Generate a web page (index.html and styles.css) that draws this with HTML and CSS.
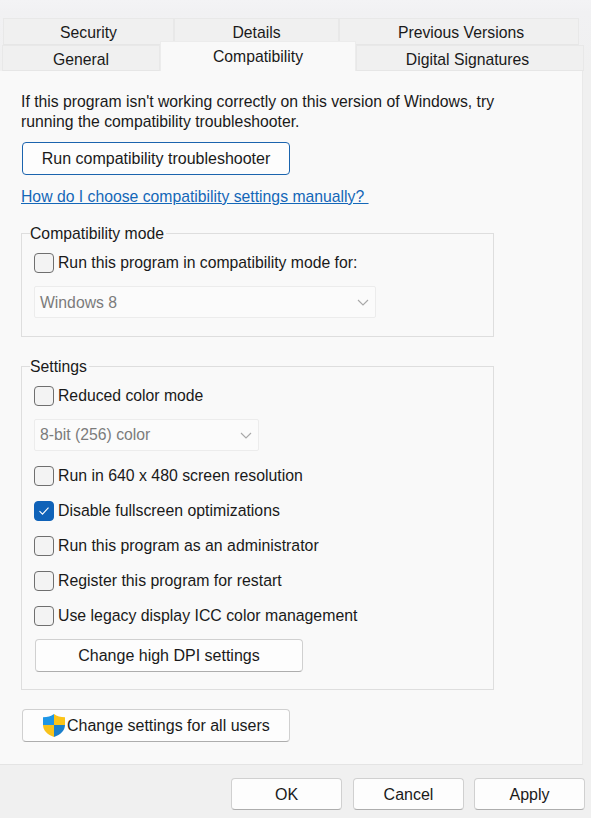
FILE: index.html
```html
<!DOCTYPE html>
<html>
<head>
<meta charset="UTF-8">
<meta name="viewport" content="initial-scale=1, maximum-scale=1">
<title>Properties</title>
<link rel="stylesheet" href="styles.css">
</head>
<body>
    <div class="dialog">
        <div class="tabs">
            <div class="tab-row tab-row-back">
                <div class="tab tab-security">Security</div>
                <div class="tab tab-details">Details</div>
                <div class="tab tab-versions">Previous Versions</div>
            </div>
            <div class="tab-row tab-row-front">
                <div class="tab tab-general">General</div>
                <div class="tab tab-compat active">Compatibility</div>
                <div class="tab tab-signatures">Digital Signatures</div>
            </div>
        </div>

        <div class="panel">
            <p class="intro">If this program isn't working correctly on this version of Windows, try running the compatibility troubleshooter.</p>
            <button class="btn btn-wide btn-primary">Run compatibility troubleshooter</button>
            <a class="help-link" href="#">How do I choose compatibility settings manually?&nbsp;</a>

            <fieldset class="group group-mode">
                <legend>Compatibility mode</legend>
                <label class="check"><span class="box"></span>Run this program in compatibility mode for:</label>
                <div class="select select-os">Windows 8
                    <svg class="chevron" viewBox="0 0 12 7"><path d="M1 1l5 5 5-5" fill="none" stroke="#a8a8a8" stroke-width="1.1"/></svg>
                </div>
            </fieldset>

            <fieldset class="group group-settings">
                <legend>Settings</legend>
                <label class="check"><span class="box"></span>Reduced color mode</label>
                <div class="select select-color">8-bit (256) color
                    <svg class="chevron" viewBox="0 0 12 7"><path d="M1 1l5 5 5-5" fill="none" stroke="#a8a8a8" stroke-width="1.1"/></svg>
                </div>
                <div class="check-list">
                    <label class="check"><span class="box"></span>Run in 640 x 480 screen resolution</label>
                    <label class="check"><span class="box checked"><svg viewBox="0 0 12 10"><path d="M1.5 5.2l3 3 6-6.6" fill="none" stroke="#fff" stroke-width="1.1"/></svg></span>Disable fullscreen optimizations</label>
                    <label class="check"><span class="box"></span>Run this program as an administrator</label>
                    <label class="check"><span class="box"></span>Register this program for restart</label>
                    <label class="check"><span class="box"></span>Use legacy display ICC color management</label>
                </div>
                <button class="btn btn-wide btn-dpi">Change high DPI settings</button>
            </fieldset>

            <button class="btn btn-wide btn-shield">
                <svg class="shield" viewBox="0 0 22 23">
                    <path d="M11 0C8 2.400 4.500 3.300 0 3.300V11h11z" fill="#1e96e6"/>
                    <path d="M11 0c3 2.400 6.500 3.300 11 3.300V11H11z" fill="#fcc417"/>
                    <path d="M0 11c.2 5.800 4.500 9.800 11 12V11z" fill="#f7c21c"/>
                    <path d="M22 11c-.2 5.800-4.500 9.800-11 12V11z" fill="#1b7fcb"/>
                </svg>Change settings for all users
            </button>
        </div>

        <div class="footer">
            <button class="btn btn-footer">OK</button>
            <button class="btn btn-footer">Cancel</button>
            <button class="btn btn-footer btn-apply">Apply</button>
        </div>
    </div>
</body>
</html>
```

FILE: styles.css
```css
* { padding: 0; margin: 0; box-sizing: border-box; }
html, body {
    width: 100%;
    height: 100%;
}
body {
    overflow: hidden;
    background: #f0f0f0;
    font-family: "Liberation Sans", Arial, sans-serif;
    font-size: 15.75px;
    color: #1a1a1a;
}
.dialog {
    display: flex;
    flex-direction: column;
    height: 818px;
    background: linear-gradient(#f3f3f5 0, #f1f1f3 12px, #f0f0f0 71px);
}

/* tabs */
.tabs {
    height: 71px;
    padding-top: 18px;
}
.tab-row {
    display: flex;
    height: 27px;
}
.tab-row-back {
    padding-left: 3px;
}
.tab-row-back .tab {
    line-height: 28px;
}
.tab-row-front {
    padding-left: 2px;
    height: 26px;
}
.tab {
    text-align: center;
    background: #f0f0f0;
    border: 1px solid #e8e8e8;
    border-bottom: 1px solid #e6e6e6;
    line-height: 27px;
}
.tab-security { width: 171px; }
.tab-details { width: 165px; }
.tab-versions { width: 240px; padding-left: 4px; }
.tab-general { width: 158px; }
.tab-signatures { width: 228px; padding-right: 5px; }
.tab-compat {
    width: 196px;
    margin-top: -4px;
    height: 30px;
    line-height: 29px;
    background: #f9f9f9;
    border-color: #ececec;
    border-bottom: 0;
}

/* main panel */
.panel {
    height: 694px;
    margin-right: 8px;
    padding: 21px 0 0 21px;
    background: #f9f9f9;
    border-right: 1px solid #e9e9e9;
    border-bottom: 1px solid #e4e4e4;
}
.intro {
    width: 490px;
    line-height: 20px;
}
.btn {
    display: block;
    font: inherit;
    font-size: 16px;
    color: inherit;
    background: #fdfdfd;
    border: 1px solid #d0d0d0;
    border-bottom-color: #adadad;
    border-radius: 4px;
    text-align: center;
}
.btn-wide {
    width: 268px;
    height: 33px;
}
.btn-primary {
    margin: 10px 0 0 1px;
    border: 1px solid #1b64ae;
}
.help-link {
    display: inline-block;
    margin-top: 12px;
    color: #1467b8;
    line-height: 20px;
}

/* group boxes */
.group {
    display: block;
    width: 473px;
    border: 1px solid #dedede;
    padding: 0 0 0 12px;
}
.group legend {
    margin-left: -4px;
    padding: 1px 2px 0 0;
    line-height: 20px;
}
.group-mode {
    height: 114px;
    margin-top: 16px;
}
.group-settings {
    height: 334px;
    margin-top: 19px;
}
.check {
    display: flex;
    align-items: center;
    gap: 4px;
    height: 20px;
    margin-top: 9px;
}
.box {
    flex: none;
    display: flex;
    align-items: center;
    justify-content: center;
    width: 20px;
    height: 20px;
    background: #f3f3f3;
    border: 1px solid #6f6f6f;
    border-radius: 4px;
}
.box.checked {
    background: #0f62b8;
    border-color: #0f62b8;
}
.box svg {
    width: 12px;
    height: 10px;
}
.select {
    display: flex;
    align-items: center;
    justify-content: space-between;
    height: 32px;
    margin-top: 13px;
    padding: 0 6px 0 5px;
    color: #7b7b7b;
    background: #fbfbfb;
    border: 1px solid #ececec;
    border-radius: 2px;
}
.select-os { width: 342px; padding-top: 1px; }
.select-color { width: 225px; }
.chevron {
    width: 12px;
    height: 7px;
}
.check-list {
    display: flex;
    flex-direction: column;
    gap: 15px;
    margin-top: 15px;
    font-size: 15.85px;
}
.check-list .check {
    margin-top: 0;
}
.btn-dpi {
    margin: 13px 0 0 1px;
}
.btn-shield {
    display: flex;
    align-items: center;
    margin: 19px 0 0 1px;
    padding-left: 20px;
}
.shield {
    flex: none;
    width: 22px;
    height: 23px;
    margin-right: 2px;
}

/* bottom buttons */
.footer {
    display: flex;
    gap: 11px;
    padding: 13px 0 0 231px;
}
.btn-footer {
    width: 111px;
    height: 32px;
    padding-top: 2px;
}
.btn-apply {
    margin-left: -1px;
}
```
